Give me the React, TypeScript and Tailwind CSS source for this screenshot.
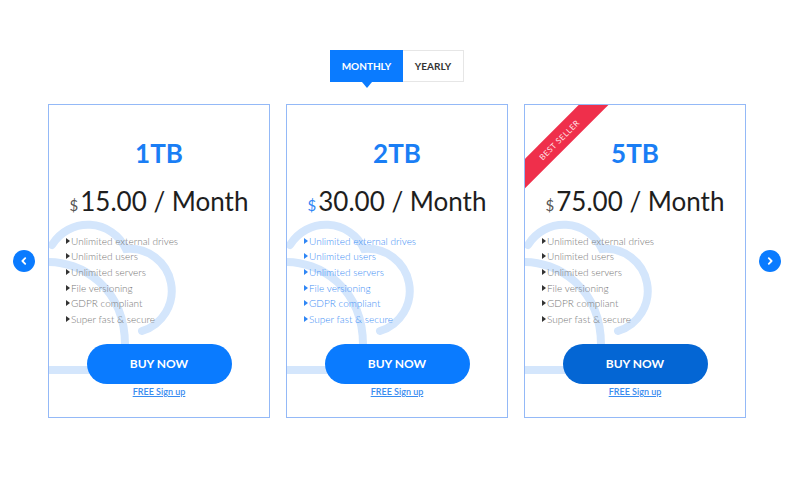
import React from 'react'

type Plan = {
  size: string
  price: string
  featured?: boolean
  bestSeller?: boolean
}

const plans: Plan[] = [
  { size: '1TB', price: '15.00' },
  { size: '2TB', price: '30.00', featured: true },
  { size: '5TB', price: '75.00', bestSeller: true },
]

const features = [
  'Unlimited external drives',
  'Unlimited users',
  'Unlimited servers',
  'File versioning',
  'GDPR compliant',
  'Super fast & secure',
]

const CloudBg = () => (
  <svg
    className="absolute left-0 top-0 pointer-events-none"
    width="222"
    height="314"
    viewBox="0 0 222 314"
    fill="none"
  >
    <g stroke="#d4e6fc" strokeWidth="8" strokeLinecap="round">
      <path d="M 3 140 A 42 42 0 0 1 77 144 A 42 42 0 0 1 93 226" />
      <path d="M -5 157 C 35 155, 76 185, 76 240 L 76 252" />
      <path d="M -5 265 L 110 265" />
    </g>
  </svg>
)

const Bullet: React.FC<{ color: string }> = ({ color }) => (
  <svg width="4" height="6" viewBox="0 0 4 6" className="shrink-0">
    <path d="M0 0 L4 3 L0 6 Z" fill={color} />
  </svg>
)

const PriceCard: React.FC<{ plan: Plan }> = ({ plan }) => (
  <div className="relative w-[222px] h-[314px] border border-[#94b9f7] bg-white overflow-hidden">
    <CloudBg />

    {plan.bestSeller && (
      <div className="absolute left-[-38px] top-[24px] w-[144px] h-[21px] bg-[#ef2f4b] -rotate-45 flex items-center justify-center">
        <span className="text-[8px] tracking-[0.5px] text-[#ffe3e7] leading-none">BEST SELLER</span>
      </div>
    )}

    <div className="relative flex flex-col items-center">
      <div className="mt-[31px] h-[34px] flex items-center text-[26px] font-bold text-[#1a7ef5] leading-none">
        {plan.size}
      </div>
      <div className="mt-[18px] h-[34px] flex items-baseline text-[#1e1e1e] leading-none">
        <span className={`text-[15px] mr-[2px] ${plan.featured ? 'text-[#2f86f5]' : 'text-[#555]'}`}>$</span>
        <span className="text-[26px]">{plan.price} / Month</span>
      </div>
      <ul className="self-start ml-[17px] mt-[11px] flex flex-col">
        {features.map((f) => (
          <li key={f} className="h-[15.6px] flex items-center gap-[1px]">
            <Bullet color={plan.featured ? '#2f86f5' : '#333'} />
            <span
              className={`text-[10px] font-light leading-none ${plan.featured ? 'text-[#3f8ff5]' : 'text-[#777]'}`}
            >
              {f}
            </span>
          </li>
        ))}
      </ul>
      <button
        className={`mt-[17px] w-[145px] h-[40px] rounded-full text-white text-[12px] font-bold ${
          plan.bestSeller ? 'bg-[#0466d4]' : 'bg-[#0a7bff]'
        }`}
      >
        BUY NOW
      </button>
      <a href="#" className="mt-[1px] text-[9px] font-semibold text-[#3a8cf0] underline leading-[14px]">
        FREE Sign up
      </a>
    </div>
  </div>
)

const ArrowButton: React.FC<{ dir: 'left' | 'right' }> = ({ dir }) => (
  <button className="w-[22px] h-[22px] rounded-full bg-[#0a7bff] flex items-center justify-center shrink-0">
    <svg width="8" height="8" viewBox="0 0 8 8" fill="none">
      <path
        d={dir === 'left' ? 'M5.2 1.2 L2.4 4 L5.2 6.8' : 'M2.8 1.2 L5.6 4 L2.8 6.8'}
        stroke="white"
        strokeWidth="1.8"
        strokeLinecap="round"
        strokeLinejoin="round"
      />
    </svg>
  </button>
)

export default function App() {
  return (
    <div className="w-[800px] h-[480px] bg-white font-['Lato','Noto_Sans',sans-serif] flex flex-col">
      {/* Billing toggle */}
      <div className="mt-[50px] flex justify-center pr-[6px]">
        <div className="flex">
          <div className="relative w-[73px] h-[32px] bg-[#0a7bff] flex items-center justify-center">
            <span className="text-[10px] font-bold text-white">MONTHLY</span>
            <span className="absolute left-1/2 -translate-x-1/2 top-full w-0 h-0 border-l-[5px] border-r-[5px] border-t-[6px] border-l-transparent border-r-transparent border-t-[#0a7bff]" />
          </div>
          <div className="w-[61px] h-[32px] border border-l-0 border-[#e6e6e6] flex items-center justify-center">
            <span className="text-[10px] font-bold text-[#333]">YEARLY</span>
          </div>
        </div>
      </div>

      {/* Plans carousel */}
      <div className="mt-[22px] flex items-center pl-[13px]">
        <ArrowButton dir="left" />
        <div className="ml-[13px] flex gap-[16px]">
          {plans.map((p) => (
            <PriceCard key={p.size} plan={p} />
          ))}
        </div>
        <div className="ml-[13px]">
          <ArrowButton dir="right" />
        </div>
      </div>
    </div>
  )
}
